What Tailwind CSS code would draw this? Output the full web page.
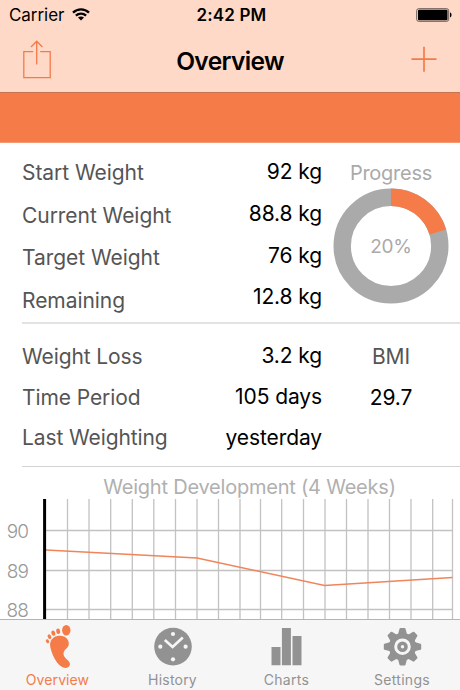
<!DOCTYPE html>
<html lang="en">
<head>
    <meta charset="UTF-8">
    <title>Overview</title>
    <script src="https://cdn.jsdelivr.net/npm/@tailwindcss/browser@4"></script>
</head>
<body class="bg-white w-[460px] h-[690px] overflow-hidden flex flex-col font-['Inter','Liberation_Sans',sans-serif]">
<header class="h-[93px] shrink-0 bg-[#ffd9c7] border-b border-[#c87350] text-black">
    <div class="h-[30px] grid grid-cols-3 items-center pl-[9px] pr-[8px]">
        <div class="flex items-center gap-[8px] pt-px">
            <span class="text-[17px] tracking-[-0.05px]">Carrier</span>
            <svg class="w-[18px] h-[13px] -mt-[2px]" viewBox="0 0 18 13" fill="none" stroke="#000" stroke-width="2.3">
                <path d="M1 4.6C5.5 .2 12.5 .2 17 4.6"/>
                <path d="M3.9 7.7C6.8 4.9 11.2 4.9 14.1 7.7"/>
                <path d="M9 12.6L6 9.6C7.7 8.1 10.3 8.1 12 9.6Z" fill="#000" stroke="none"/>
            </svg>
        </div>
        <span class="pt-px pl-[2px] text-[17px] font-semibold text-center tracking-[0.15px] whitespace-nowrap">2:42 PM</span>
        <svg class="w-[36px] h-[14px] justify-self-end" viewBox="0 0 36 14">
            <rect x=".7" y=".7" width="32" height="12.6" rx="2" fill="none" stroke="#6b5b54"/>
            <rect x="2" y="1.8" width="29.5" height="10.4" rx="1" fill="#000"/>
            <path d="M34 4.6C36 5 36 9 34 9.4Z" fill="#000"/>
        </svg>
    </div>
    <div class="h-[62px] grid grid-cols-3 items-center pl-[23px] pr-[23px]">
        <svg class="w-[28px] h-[39px] -mt-[3px]" viewBox="0 0 28 39" fill="none" stroke="#f47b48" stroke-width="1.3">
            <path d="M10.2 11.6H.8V37.6H27.2V11.6H17.2"/>
            <path d="M13.7 24.5V1.4M8 7L13.7 1.2L19.4 7"/>
        </svg>
        <h1 class="text-[24.5px] font-semibold text-center tracking-[-0.65px] whitespace-nowrap">Overview</h1>
        <svg class="w-[26px] h-[26px] justify-self-end -mt-[5px]" viewBox="0 0 26 26" stroke="#f47b48" stroke-width="1.7">
            <path d="M.5 13.2H25.5M13 .7V25.7"/>
        </svg>
    </div>
</header>
<div class="h-[50px] shrink-0 bg-[#f57b48] border-b border-[#f59a75]"></div>

<main class="h-[476px] shrink-0 flex flex-col text-[21px] text-[#555]">
    <section class="h-[181px] shrink-0 ml-[22px] flex border-b-2 border-[#e2e2e2]">
        <div class="w-[160px] pt-[9px] leading-[42.7px] whitespace-nowrap tracking-[-0.05px]">
            <p>Start Weight</p>
            <p>Current Weight</p>
            <p>Target Weight</p>
            <p>Remaining</p>
        </div>
        <div class="w-[140px] pt-[8px] leading-[41.8px] text-right text-black tracking-[-0.1px]">
            <p>92 kg</p>
            <p>88.8 kg</p>
            <p>76 kg</p>
            <p>12.8 kg</p>
        </div>
        <div class="w-[138px] pt-[15px] flex flex-col items-center text-[#aaa]">
            <p class="text-[20px] leading-[30px] tracking-[-0.25px]">Progress</p>
            <svg class="w-[116px] h-[116px]" viewBox="0 0 116 116">
                <circle cx="58" cy="58" r="48.8" fill="none" stroke="#aaa" stroke-width="17.4"/>
                <path d="M58 9.2A48.8 48.8 0 0 1 104.7 43.9" fill="none" stroke="#f57b48" stroke-width="17.4"/>
                <text x="58" y="65" text-anchor="middle" font-size="19" fill="#aaa" letter-spacing="-.3">20%</text>
            </svg>
        </div>
    </section>
    <section class="h-[143px] shrink-0 ml-[22px] flex border-b border-[#d2d2d2]">
        <div class="w-[160px] pt-[13px] leading-[40.5px] whitespace-nowrap tracking-[-0.1px]">
            <p>Weight Loss</p>
            <p>Time Period</p>
            <p>Last Weighting</p>
        </div>
        <div class="w-[140px] pt-[12px] leading-[40.8px] text-right text-black tracking-[-0.1px]">
            <p>3.2 kg</p>
            <p>105 days</p>
            <p>yesterday</p>
        </div>
        <div class="w-[138px] pt-[12px] leading-[41px] text-center tracking-[-0.1px]">
            <p>BMI</p>
            <p class="text-black">29.7</p>
        </div>
    </section>
    <section class="grow flex flex-col">
        <h2 class="h-[32px] pt-[5px] pl-[39px] text-center text-[20px] leading-[30px] tracking-[-0.22px] text-[#b0b0b0]">Weight Development (4 Weeks)</h2>
        <svg class="w-[460px] h-[120px]" viewBox="0 499 460 120" fill="none">
            <path d="M67.5 499V619M89 499V619M110.7 499V619M132.3 499V619M153.8 499V619M175.5 499V619M197 499V619M218.5 499V619M240 499V619M260.5 499V619M281.7 499V619M303.5 499V619M325 499V619M346.5 499V619M368 499V619M389.5 499V619M411 499V619M432.7 499V619M452.5 499V619M46 530.5H453M46 570.5H453M46 609.5H453" stroke="#c2c2c2" stroke-width="1.3"/>
            <path d="M46 550L197 558L324.5 585.5L452.5 577.5" stroke="#f0845a" stroke-width="1.4"/>
            <path d="M44.6 499V619" stroke="#000" stroke-width="3"/>
            <g fill="#999" font-size="19" font-weight="300" letter-spacing="-.9" text-anchor="end">
                <text x="28" y="538">90</text>
                <text x="28" y="578">89</text>
                <text x="28" y="616.5">88</text>
            </g>
        </svg>
    </section>
</main>

<nav class="h-[71px] shrink-0 bg-[#f6f6f6] border-t border-[#b4b4b4] grid grid-cols-4 text-[14px] text-[#929292] leading-[18px]">
    <a href="#" class="flex flex-col items-center gap-[1px] pt-[2px] text-[#f57b48]">
        <svg class="w-[40px] h-[48px]" viewBox="37.5 622 40 48" fill="currentColor">
            <ellipse cx="65.8" cy="630.3" rx="4.2" ry="5.3"/>
            <ellipse cx="57.7" cy="631.3" rx="2" ry="2.8" transform="rotate(-12 57.7 631.3)"/>
            <ellipse cx="52.8" cy="633.2" rx="1.9" ry="2.7" transform="rotate(-20 52.8 633.2)"/>
            <ellipse cx="49" cy="636.7" rx="1.7" ry="2.4" transform="rotate(-28 49 636.7)"/>
            <ellipse cx="47" cy="641.3" rx="1.5" ry="2.1" transform="rotate(-30 47 641.3)"/>
            <path d="M50 642C51.5 637.5 55.5 635.5 60 635.8C65 636.2 68.5 639.5 68.3 644C68.1 647.6 65 648.7 63.5 651.4C62 654.5 64 657.3 67 660C70 662.7 70.4 665.5 67.5 667.3C64.5 669 60 667.3 56.5 662.5C53 657.5 51 652 50 648C49.5 645.7 49.4 643.8 50 642Z"/>
        </svg>
        <span class="tracking-[0.1px]">Overview</span>
    </a>
    <a href="#" class="flex flex-col items-center gap-[1px] pt-[2px]">
        <svg class="w-[40px] h-[48px]" viewBox="152.2 622 40 48">
            <circle cx="172.2" cy="646.6" r="18.8" fill="currentColor"/>
            <g fill="#f6f6f6">
                <circle cx="172.2" cy="634" r="2.1"/>
                <circle cx="184.8" cy="646.7" r="2.1"/>
                <circle cx="172.2" cy="659.3" r="2.1"/>
                <circle cx="159.5" cy="646.7" r="2.1"/>
            </g>
            <path d="M164 640L171.8 647L182 637.4" fill="none" stroke="#f6f6f6" stroke-width="2.7"/>
        </svg>
        <span class="tracking-[0.2px]">History</span>
    </a>
    <a href="#" class="flex flex-col items-center gap-[1px] pt-[2px]">
        <svg class="w-[40px] h-[48px]" viewBox="267.5 622 40 48" fill="currentColor">
            <path d="M271 647H280V665.3H271ZM281.4 628H290.4V665.3H281.4ZM292 636H301V665.3H292Z"/>
        </svg>
        <span class="pr-[2px] tracking-[0.3px]">Charts</span>
    </a>
    <a href="#" class="flex flex-col items-center gap-[1px] pt-[2px]">
        <svg class="w-[40px] h-[48px]" viewBox="-19.5 -24.7 40 48" fill="currentColor">
            <g id="teeth">
                <path id="tooth" d="M-4.6 -12L-3 -18Q-2.8 -18.7 -2 -18.7H2Q2.8 -18.7 3 -18L4.6 -12V12L3 18Q2.8 18.7 2 18.7H-2Q-2.8 18.7 -3 18L-4.6 12Z"/>
                <use href="#tooth" transform="rotate(90)"/>
            </g>
            <use href="#teeth" transform="rotate(45)"/>
            <circle r="13.7"/>
            <circle r="6.8" fill="none" stroke="#f6f6f6" stroke-width="3"/>
            <circle r="1.7" fill="#f6f6f6"/>
        </svg>
        <span class="pr-px tracking-[0.3px]">Settings</span>
    </a>
</nav>
</body>
</html>
